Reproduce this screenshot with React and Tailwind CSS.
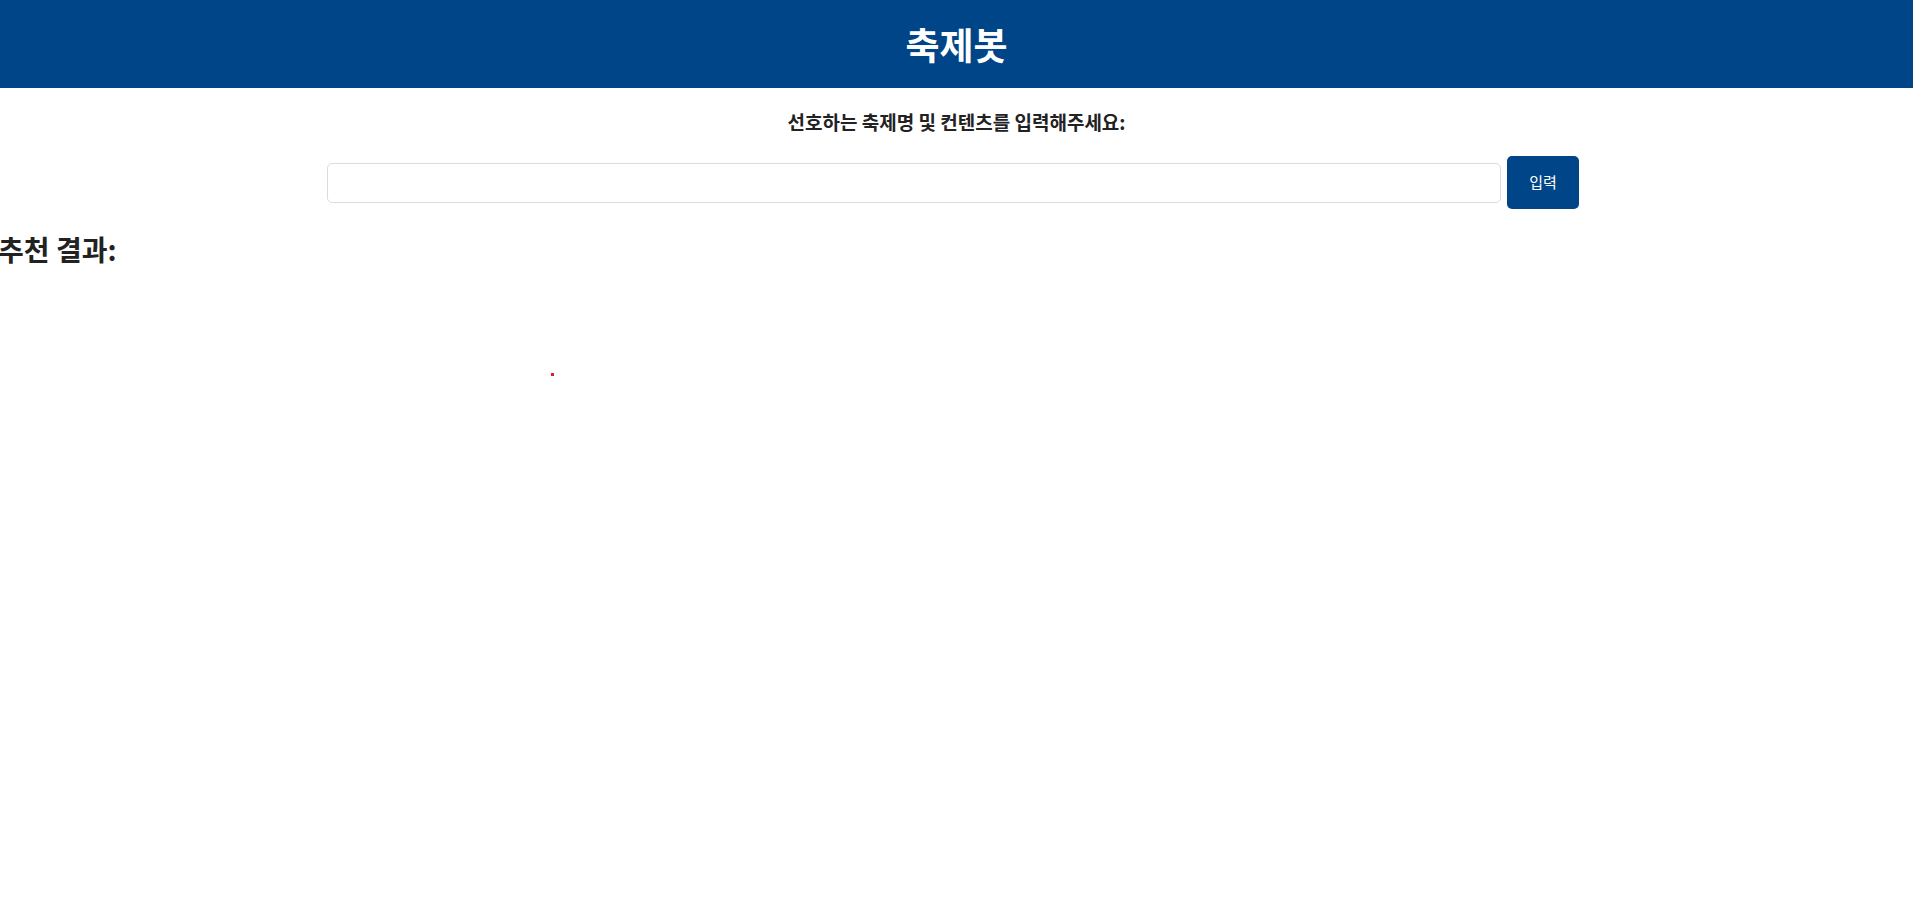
import React, { useState } from 'react';

function App() {
  const [query, setQuery] = useState('');

  // 입력 처리
  const handleSubmit = (e) => {
    e.preventDefault();
  };

  return (
    <div
      className="min-h-[916px] bg-white text-[#222]"
      style={{ fontFamily: '"Noto Sans CJK KR", "Noto Sans", sans-serif' }}
    >
      <header className="h-[88px] bg-[#004587] flex items-center justify-center">
        <h1 className="text-[37px] font-bold text-white leading-none">축제봇</h1>
      </header>

      <div className="flex flex-col items-center">
        <p className="mt-[23px] text-[19px] font-bold leading-[22px]">선호하는 축제명 및 컨텐츠를 입력해주세요:</p>
        <form className="mt-[23px] flex items-center gap-[6px] pr-[7px]" onSubmit={handleSubmit}>
          <input
            className="w-[1174px] h-[40px] border border-[#dcdcdc] rounded-[5px] px-3 outline-none"
            type="text"
            value={query}
            onChange={(e) => setQuery(e.target.value)}
          />
          <button
            type="submit"
            className="w-[72px] h-[53px] bg-[#004587] text-white text-[15px] rounded-[5px]"
          >
            입력
          </button>
        </form>
      </div>

      <h2 className="mt-[24px] -ml-[2px] text-[28px] font-bold leading-[32px]">추천 결과:</h2>
      <div className="ml-[551px] mt-[108px] w-[3px] h-[3px] bg-[#e02020]" />
    </div>
  );
}

export default App;
